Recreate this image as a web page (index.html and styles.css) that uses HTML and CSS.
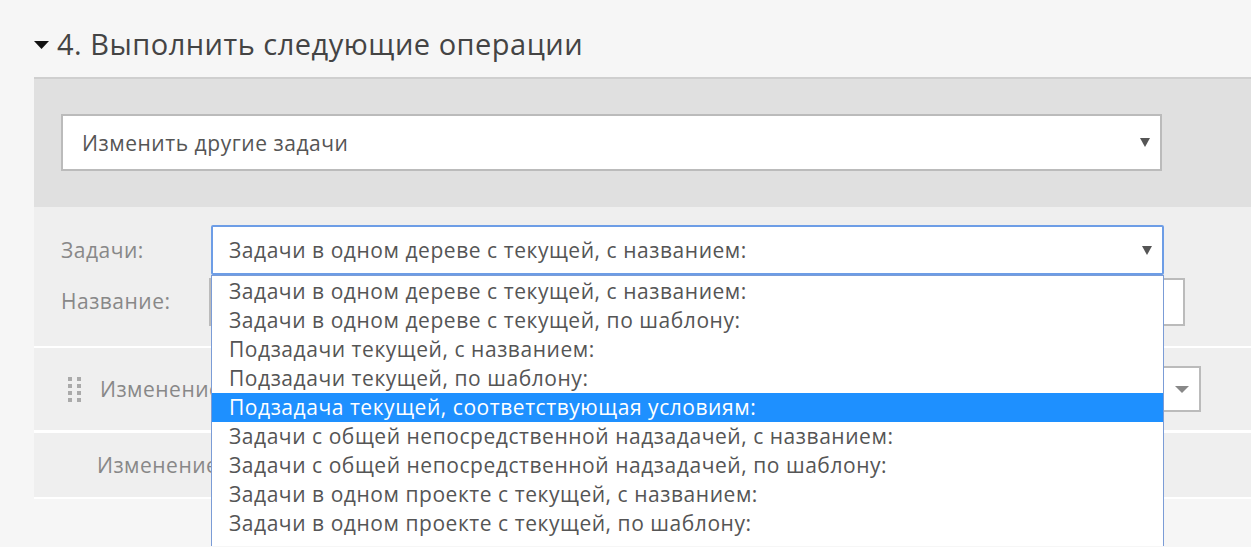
FILE: index.html
```html
<!DOCTYPE html>
<html lang="ru">
<head>
  <meta charset="UTF-8">
  <title>Операции</title>
  <link rel="stylesheet" href="styles.css">
</head>
<body>
  <div class="section">
    <h2 class="section-title">
      <svg class="caret" width="15" height="8" viewBox="0 0 15 8"><path d="M0 0H15L7.5 8Z"/></svg>
      4. Выполнить следующие операции
    </h2>

    <div class="action-panel">
      <div class="select big">
        <span>Изменить другие задачи</span>
        <svg class="arrow" width="10" height="9" viewBox="0 0 10 9"><path d="M0 0H10L5 9Z"/></svg>
      </div>
    </div>

    <div class="params">
      <div class="param-row">
        <label>Задачи:</label>
        <div class="select focused">
          <span>Задачи в одном дереве с текущей, с названием:</span>
          <svg class="arrow" width="10" height="9" viewBox="0 0 10 9"><path d="M0 0H10L5 9Z"/></svg>
          <ul class="options">
            <li>Задачи в одном дереве с текущей, с названием:</li>
            <li>Задачи в одном дереве с текущей, по шаблону:</li>
            <li>Подзадачи текущей, с названием:</li>
            <li>Подзадачи текущей, по шаблону:</li>
            <li class="active">Подзадача текущей, соответствующая условиям:</li>
            <li>Задачи с общей непосредственной надзадачей, с названием:</li>
            <li>Задачи с общей непосредственной надзадачей, по шаблону:</li>
            <li>Задачи в одном проекте с текущей, с названием:</li>
            <li>Задачи в одном проекте с текущей, по шаблону:</li>
          </ul>
        </div>
      </div>
      <div class="param-row">
        <label>Название:</label>
        <input class="text-input" type="text">
      </div>
    </div>

    <div class="change-row">
      <span class="handle"><i></i><i></i><i></i><i></i><i></i><i></i><i></i><i></i></span>
      <span class="change-label">Изменение</span>
      <div class="select small">
        <span></span>
        <svg class="arrow light" width="14" height="7" viewBox="0 0 14 7"><path d="M0 0H14L7 7Z"/></svg>
      </div>
    </div>

    <div class="change-row plain">
      <span class="change-label">Изменение</span>
    </div>
  </div>
</body>
</html>
```

FILE: styles.css
```css
body {
  margin: 0;
  background-color: #f6f6f6;
  font-family: "Open Sans", "Noto Sans", sans-serif;
  color: #555;
  overflow: hidden;
  height: 547px;
}

.section {
  padding-left: 34px;
}

.section-title {
  display: flex;
  align-items: center;
  gap: 8px;
  margin: 0;
  height: 77px;
  padding-top: 9px;
  box-sizing: border-box;
  font-size: 29px;
  font-weight: 400;
  letter-spacing: 0.5px;
  color: #444;
}

.caret {
  fill: #111;
  margin-top: 3px;
}

.action-panel {
  border-top: 2px solid #cfcfcf;
  background-color: #e0e0e0;
  padding: 35px 89px 36px 27px;
}

.select {
  position: relative;
  display: flex;
  align-items: center;
  justify-content: space-between;
  background-color: #fff;
  border: 2px solid #bbb;
  box-sizing: border-box;
  font-size: 21px;
  letter-spacing: 0.55px;
  color: #555;
}

.select.big {
  height: 57px;
  padding: 0 10px 0 19px;
}

.arrow {
  fill: #555;
}

.arrow.light {
  fill: #888;
}

.params {
  background-color: #efefef;
  padding: 18px 66px 20px 27px;
  border-bottom: 2px solid #fff;
}

.param-row {
  display: flex;
  align-items: center;
}

.param-row label {
  width: 150px;
  font-size: 21px;
  letter-spacing: 0.5px;
  color: #888;
}

.select.focused {
  width: 953px;
  height: 50px;
  padding: 0 10px 0 16px;
  border-color: #6d9de6;
  border-radius: 2px;
}

.options {
  position: absolute;
  left: -2px;
  top: 48px;
  width: 953px;
  margin: 0;
  padding: 1px 0 8px;
  list-style: none;
  background-color: #fff;
  border: 1px solid #7b9cd6;
  border-bottom: 0;
  box-sizing: border-box;
  z-index: 5;
}

.options li {
  height: 29px;
  line-height: 29px;
  padding-left: 17px;
  font-size: 21px;
  color: #555;
  white-space: nowrap;
}

.options li.active {
  background-color: #1e90ff;
  color: #fff;
}

.text-input {
  width: 976px;
  height: 48px;
  margin: 3px 0 0 -2px;
  border: 2px solid #bbb;
  box-sizing: border-box;
  background-color: #fff;
}

.change-row {
  display: flex;
  align-items: center;
  height: 82px;
  background-color: #efefef;
  border-bottom: 3px solid #fff;
  padding-left: 34px;
  padding-right: 50px;
}

.change-row.plain {
  height: 64px;
  border-bottom-width: 2px;
  padding-left: 63px;
}

.handle {
  display: grid;
  grid-template-columns: 4px 4px;
  gap: 3px 5px;
  margin-right: 19px;
}

.handle i {
  width: 4px;
  height: 4px;
  background-color: #aaa;
}

.change-label {
  font-size: 21px;
  letter-spacing: 0.5px;
  color: #888;
  white-space: nowrap;
}

.select.small {
  margin-left: auto;
  width: 800px;
  height: 46px;
  padding: 0 10px;
}
```
